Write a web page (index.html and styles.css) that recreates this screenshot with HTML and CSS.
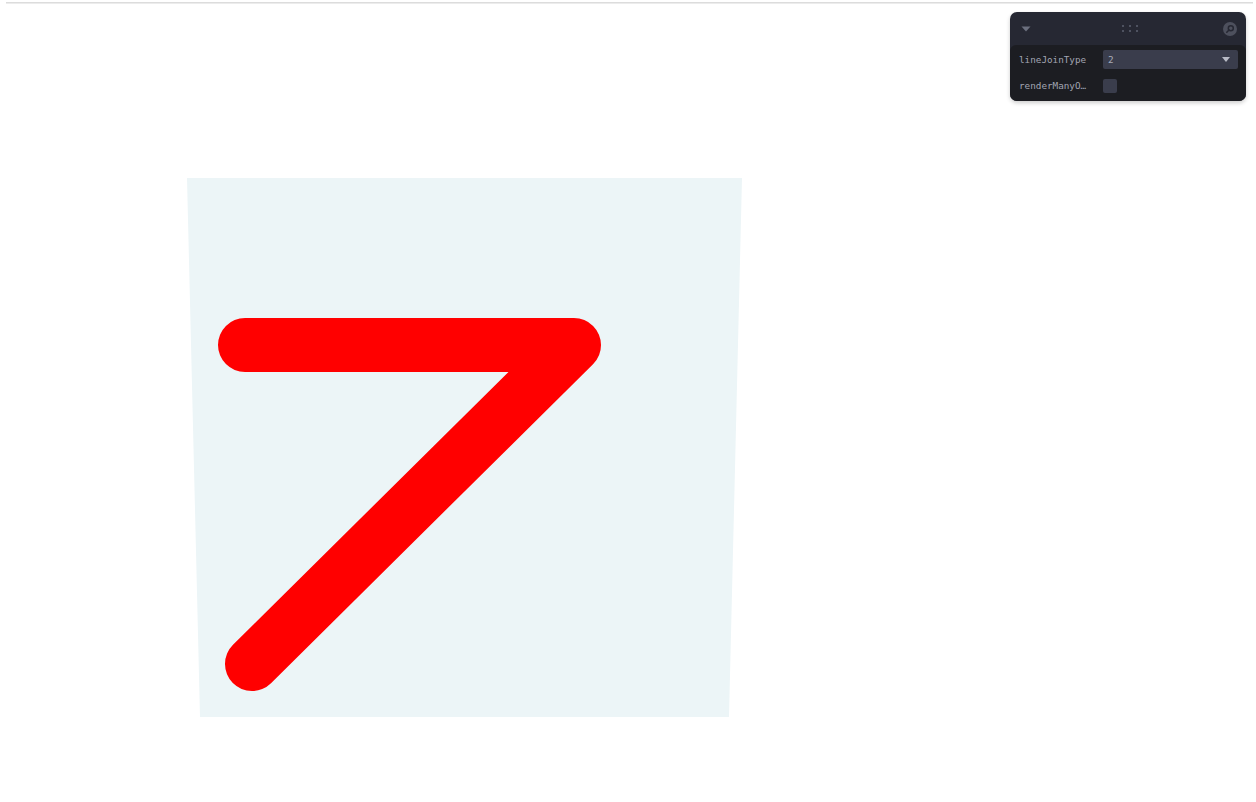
FILE: index.html
```html
<!DOCTYPE html>
<html>
<head>
<meta charset="utf-8">
<link rel="stylesheet" href="styles.css">
</head>
<body>
<div class="rule"></div>
<svg class="stage" width="1256" height="796" viewBox="0 4 1256 796">
  <polygon points="187,178 742,178 729,717 200,717" fill="#ecf5f7"/>
  <polyline points="245,345 574,345 252,664" fill="none" stroke="#ff0000" stroke-width="54" stroke-linecap="round" stroke-linejoin="round"/>
</svg>
<div class="pane">
  <div class="pane-head">
    <svg class="fold" width="10" height="6" viewBox="0 0 10 6"><path d="M0.5 0.5 H9.5 L5 5.5 Z" fill="#6b6f7e"/></svg>
    <svg class="grip" width="18" height="9" viewBox="0 0 18 9">
      <circle cx="2" cy="2" r="1" fill="#5c6070"/><circle cx="9" cy="2" r="1" fill="#5c6070"/><circle cx="16" cy="2" r="1" fill="#5c6070"/>
      <circle cx="2" cy="7" r="1" fill="#5c6070"/><circle cx="9" cy="7" r="1" fill="#5c6070"/><circle cx="16" cy="7" r="1" fill="#5c6070"/>
    </svg>
    <svg class="search" width="14" height="14" viewBox="0 0 14 14">
      <circle cx="7" cy="7" r="7" fill="#4d505d"/>
      <circle cx="7.8" cy="6.2" r="2.5" fill="none" stroke="#262833" stroke-width="1.5"/>
      <path d="M6 8 L3.8 10.2" stroke="#262833" stroke-width="1.6" stroke-linecap="round"/>
    </svg>
  </div>
  <div class="pane-body">
    <div class="row">
      <span class="label">lineJoinType</span>
      <div class="select"><span>2</span><svg width="8" height="5" viewBox="0 0 8 5"><path d="M0 0 H8 L4 5 Z" fill="#b8bbc6"/></svg></div>
    </div>
    <div class="row">
      <span class="label">renderManyO…</span>
      <div class="check"></div>
    </div>
  </div>
</div>
</body>
</html>
```
FILE: styles.css
```css
html, body {
  margin: 0;
  padding: 0;
  background: #ffffff;
  width: 1256px;
  height: 802px;
  overflow: hidden;
  position: relative;
}
.rule {
  margin: 2px 3px 0 6px;
  height: 1px;
  background: #dcdcdc;
  border-bottom: 1px solid #ececec;
}
.stage {
  display: block;
}
.pane {
  position: absolute;
  left: 1010px;
  top: 12px;
  width: 236px;
  height: 89px;
  background: #262833;
  border-radius: 7px;
  box-shadow: 0 2px 4px rgba(0,0,0,0.2);
  display: flex;
  flex-direction: column;
  overflow: hidden;
  font-family: "DejaVu Sans Mono", "Liberation Mono", monospace;
}
.pane-head {
  height: 33px;
  display: flex;
  align-items: center;
  justify-content: space-between;
  padding: 0 9px 0 11px;
  flex: none;
}
.fold { display: block; margin-top: 1px; }
.grip { display: block; margin-left: 6px; }
.search { display: block; }
.pane-body {
  flex: 1;
  background: #1c1d22;
  border-radius: 6px 6px 0 0;
  padding: 5px 8px 0 9px;
  display: flex;
  flex-direction: column;
  gap: 7px;
}
.row {
  display: flex;
  align-items: center;
  height: 19px;
}
.label {
  width: 84px;
  font-size: 9.3px;
  color: #a2a5b2;
  white-space: nowrap;
}
.select {
  width: 135px;
  height: 19px;
  background: #3a3d4c;
  border-radius: 2px;
  display: flex;
  align-items: center;
  justify-content: space-between;
  padding: 0 8px 0 5px;
  box-sizing: border-box;
  font-size: 9.3px;
  color: #a9acb9;
}
.select svg { display: block; }
.check {
  width: 14px;
  height: 14px;
  background: #3a3d4c;
  border-radius: 2px;
}
```
